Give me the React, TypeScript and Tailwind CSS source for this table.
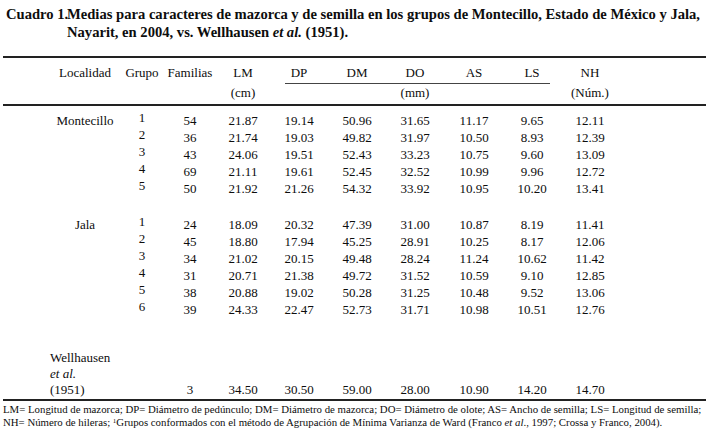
const cols =
  "grid grid-cols-[70px_44px_52px_54px_58px_58px_58px_60px_56px_60px] text-center";

const montecillo = [
  ["1", "54", "21.87", "19.14", "50.96", "31.65", "11.17", "9.65", "12.11"],
  ["2", "36", "21.74", "19.03", "49.82", "31.97", "10.50", "8.93", "12.39"],
  ["3", "43", "24.06", "19.51", "52.43", "33.23", "10.75", "9.60", "13.09"],
  ["4", "69", "21.11", "19.61", "52.45", "32.52", "10.99", "9.96", "12.72"],
  ["5", "50", "21.92", "21.26", "54.32", "33.92", "10.95", "10.20", "13.41"],
];

const jala = [
  ["1", "24", "18.09", "20.32", "47.39", "31.00", "10.87", "8.19", "11.41"],
  ["2", "45", "18.80", "17.94", "45.25", "28.91", "10.25", "8.17", "12.06"],
  ["3", "34", "21.02", "20.15", "49.48", "28.24", "11.24", "10.62", "11.42"],
  ["4", "31", "20.71", "21.38", "49.72", "31.52", "10.59", "9.10", "12.85"],
  ["5", "38", "20.88", "19.02", "50.28", "31.25", "10.48", "9.52", "13.06"],
  ["6", "39", "24.33", "22.47", "52.73", "31.71", "10.98", "10.51", "12.76"],
];

const wellhausen = ["3", "34.50", "30.50", "59.00", "28.00", "10.90", "14.20", "14.70"];

function Row({ place, values }: { place?: string; values: string[] }) {
  const [grupo, ...rest] = values;
  return (
    <div className={`${cols} h-[17px] leading-[17px]`}>
      <span>{place}</span>
      <span className="-translate-y-[3px]">{grupo}</span>
      {rest.map((v, i) => (
        <span key={i}>{v}</span>
      ))}
    </div>
  );
}

export default function App() {
  return (
    <div className="w-[715px] h-[430px] overflow-hidden bg-white text-[#0d0d0d] font-['Liberation_Serif','Times_New_Roman',serif]">
      {/* caption */}
      <div className="flex pl-[6px] pt-[5px] text-[14.6px] font-bold leading-[18px]">
        <span className="w-[61px] shrink-0 whitespace-nowrap">Cuadro 1.</span>
        <p>
          Medias para caracteres de mazorca y de semilla en los grupos de Montecillo, Estado de México y Jala,
          <br />
          Nayarit, en 2004, vs. Wellhausen <i>et al.</i> (1951).
        </p>
      </div>

      <div className="ml-[3px] mt-[15px] w-[703px] text-[13px]">
        <div className="h-[2px] bg-[#222]" />

        {/* header */}
        <div className="pl-[47px]">
          <div className={`${cols} pt-[6px] leading-[17px]`}>
            <span>Localidad</span>
            <span>Grupo</span>
            <span>Familias</span>
            <span>LM</span>
            <span>DP</span>
            <span>DM</span>
            <span>DO</span>
            <span>AS</span>
            <span>LS</span>
            <span>NH</span>
          </div>
          <div className={`${cols} mt-[2px]`}>
            <div className="col-start-5 col-end-10 ml-[15px] mr-[10px] h-px bg-[#444]" />
          </div>
          <div className={`${cols} leading-[17px]`}>
            <span className="col-start-4">(cm)</span>
            <span className="col-start-7">(mm)</span>
            <span className="col-start-10">(Núm.)</span>
          </div>
        </div>

        <div className="mt-[3px] h-[2px] bg-[#222]" />

        {/* body */}
        <div className="pl-[47px] pt-[6px]">
          {montecillo.map((r, i) => (
            <Row key={i} place={i === 0 ? "Montecillo" : undefined} values={r} />
          ))}
          <div className="h-[19px]" />
          {jala.map((r, i) => (
            <Row key={i} place={i === 0 ? "Jala" : undefined} values={r} />
          ))}

          <div className={`${cols} mt-[32px] items-end leading-[16px]`}>
            <div className="text-left">
              <div>Wellhausen</div>
              <div className="italic">et al.</div>
              <div>(1951)</div>
            </div>
            <span />
            {wellhausen.map((v, i) => (
              <span key={i}>{v}</span>
            ))}
          </div>
        </div>

        <div className="mt-[1px] h-[2px] bg-[#222]" />
      </div>

      {/* notes */}
      <div className="pl-[3px] pt-[2px] text-[10.8px] leading-[13px]">
        <p>
          LM= Longitud de mazorca; DP= Diámetro de pedúnculo; DM= Diámetro de mazorca; DO= Diámetro de olote; AS= Ancho
          de semilla; LS= Longitud de semilla;
        </p>
        <p>
          NH= Número de hileras; <sup className="text-[7px]">1</sup>Grupos conformados con el método de Agrupación de
          Mínima Varianza de Ward (Franco <i>et al</i>., 1997; Crossa y Franco, 2004).
        </p>
      </div>
    </div>
  );
}
